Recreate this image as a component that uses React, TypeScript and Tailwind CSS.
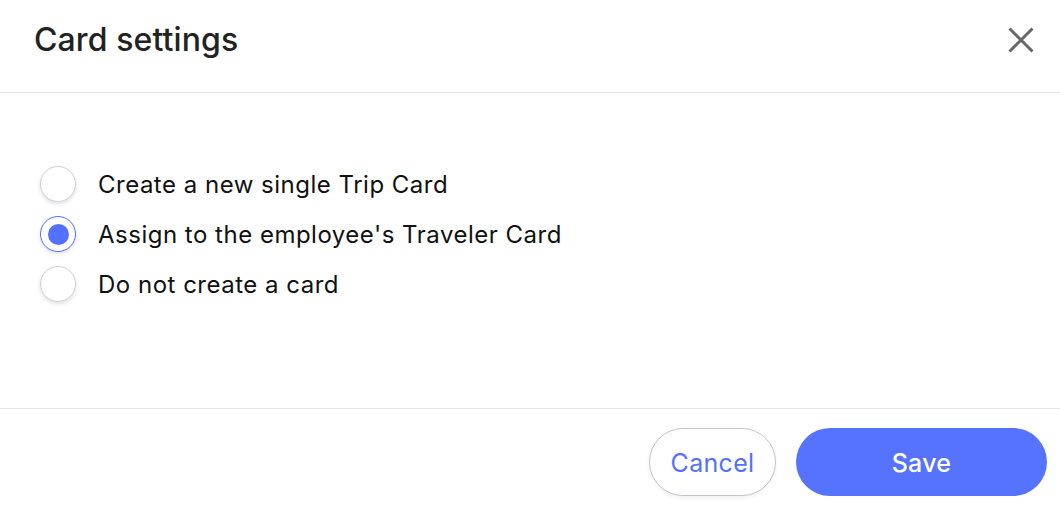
import React, { useState } from "react";

const options = [
  "Create a new single Trip Card",
  "Assign to the employee's Traveler Card",
  "Do not create a card",
];

export default function App() {
  const [sel, setSel] = useState(1);
  return (
    <div className="w-[1060px] h-[510px] bg-white flex flex-col text-[#1a1a1a]" style={{ fontFamily: "Inter, 'Noto Sans', sans-serif" }}>
      <div className="h-[93px] flex items-start justify-between pl-[34px] pr-[25px] pt-[20px] border-b border-[#e6e6e6] shrink-0">
        <h1 className="text-[32px] leading-[40px] font-medium tracking-[0.1px] text-[#222]">Card settings</h1>
        <button className="w-[28px] h-[28px] mt-[6px] flex items-center justify-center">
          <svg width="26" height="26" viewBox="0 0 26 26" fill="none" stroke="#666" strokeWidth="3" strokeLinecap="butt">
            <path d="M1.5 1.5 L24.5 24.5 M24.5 1.5 L1.5 24.5" />
          </svg>
        </button>
      </div>
      <div className="flex-1 flex flex-col pt-[73px] pl-[40px] gap-[14px] border-b border-[#e6e6e6]">
        {options.map((o, i) => (
          <label key={o} className="flex items-center gap-[22px] h-[36px] cursor-pointer" onClick={() => setSel(i)}>
            <span
              className={`w-[36px] h-[36px] rounded-full bg-white flex items-center justify-center shadow-[0_2px_4px_rgba(0,0,0,0.12)] border ${
                sel === i ? "border-[#5470ff]" : "border-[#d0d0d8]"
              }`}
            >
              {sel === i && <span className="w-[21px] h-[21px] rounded-full bg-[#5470ff]" />}
            </span>
            <span className="text-[24px] tracking-[0.5px] text-[#111] pt-[1px]">{o}</span>
          </label>
        ))}
      </div>
      <div className="h-[101px] shrink-0 flex items-start justify-end gap-[20px] pr-[13px] pt-[19px]">
        <button className="w-[127px] h-[68px] pt-[3px] rounded-full border border-[#c4c4cc] bg-white text-[#5470ff] text-[25px] tracking-[0.3px] shadow-[0_2px_4px_rgba(0,0,0,0.06)]">
          Cancel
        </button>
        <button className="w-[251px] h-[68px] pt-[3px] rounded-full bg-[#5573ff] text-white text-[25px] font-medium tracking-[0.3px]">
          Save
        </button>
      </div>
    </div>
  );
}
